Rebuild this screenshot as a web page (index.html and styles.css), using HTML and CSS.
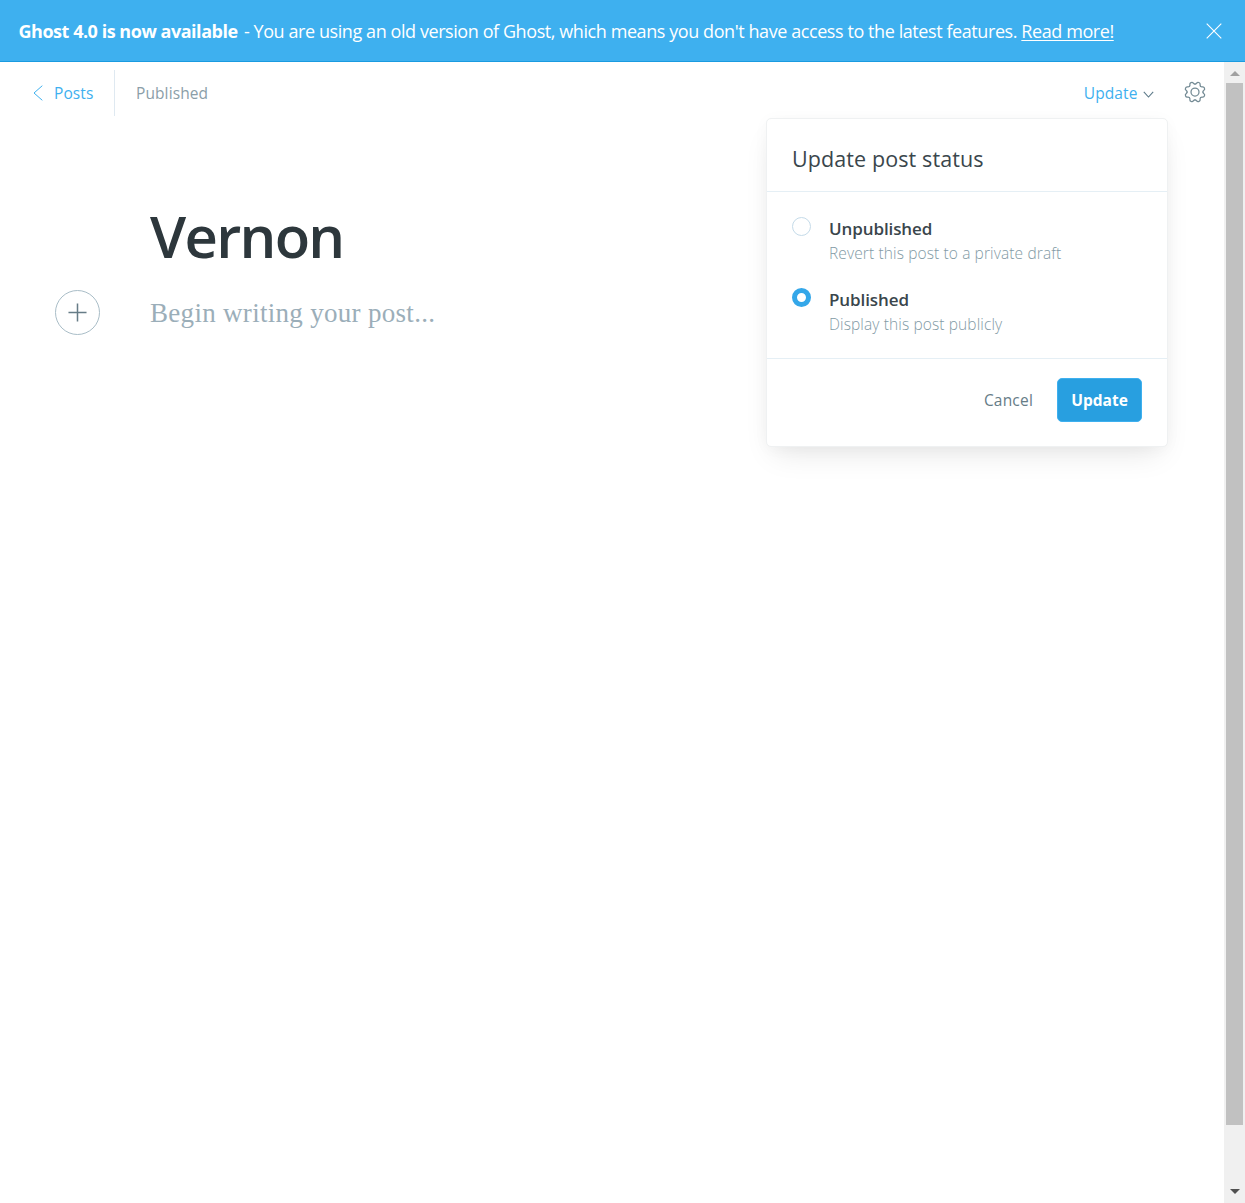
FILE: index.html
```html
<!DOCTYPE html>
<html lang="en">
<head>
<meta charset="utf-8">
<title>Vernon</title>
<link rel="stylesheet" href="styles.css">
</head>
<body>
<div class="app">
  <aside class="banner">
    <p class="banner-text"><strong class="banner-strong">Ghost 4.0 is now available</strong><span class="banner-copy"> - You are using an old version of Ghost, which means you don't have access to the latest features. <a class="banner-link" href="#">Read more!</a></span></p>
    <svg class="banner-close" viewBox="0 0 16 16"><path d="M.7.7l14.6 14.6M15.3.7L.7 15.3"/></svg>
  </aside>
  <div class="viewport">
    <main class="editor">
      <header class="toolbar">
        <a class="back" href="#">
          <svg class="back-icon" viewBox="0 0 10 16"><path d="M9.3.7L1 8l8.3 7.3"/></svg>
          <span>Posts</span>
        </a>
        <span class="state">Published</span>
        <div class="actions">
          <div class="publish">
            <button class="publish-trigger"><span>Update</span>
              <svg class="caret" viewBox="0 0 11 7"><path d="M.8.8l4.7 5.2L10.2.8"/></svg>
            </button>
            <section class="menu">
              <h2 class="menu-title">Update post status</h2>
              <div class="menu-body">
                <div class="option">
                  <span class="radio"></span>
                  <div><div class="option-name">Unpublished</div><div class="option-desc">Revert this post to a private draft</div></div>
                </div>
                <div class="option">
                  <span class="radio radio-on"></span>
                  <div><div class="option-name">Published</div><div class="option-desc">Display this post publicly</div></div>
                </div>
              </div>
              <footer class="menu-footer">
                <button class="cancel">Cancel</button>
                <button class="submit">Update</button>
              </footer>
            </section>
          </div>
          <svg class="gear" viewBox="-11 -11 22 22">
            <defs><path id="tooth" d="M0-7.900C2.200-7.900 1.300-10.500 3.830-9.500 6.500-8.500 4.100-7.100 5.590-5.590"/></defs>
            <circle r="4"/>
            <use href="#tooth"/>
            <use href="#tooth" transform="rotate(45)"/>
            <use href="#tooth" transform="rotate(90)"/>
            <use href="#tooth" transform="rotate(135)"/>
            <use href="#tooth" transform="rotate(180)"/>
            <use href="#tooth" transform="rotate(225)"/>
            <use href="#tooth" transform="rotate(270)"/>
            <use href="#tooth" transform="rotate(315)"/>
          </svg>
        </div>
      </header>
      <article class="post">
        <h1 class="post-title">Vernon</h1>
        <div class="post-row">
          <button class="add"><svg class="add-icon" viewBox="0 0 20 20"><path d="M10 .5v19M.5 10h19"/></svg></button>
          <p class="placeholder">Begin writing your post...</p>
        </div>
      </article>
    </main>
    <div class="scrollbar">
      <span class="arrow arrow-up"></span>
      <span class="thumb"></span>
      <span class="arrow arrow-down"></span>
    </div>
  </div>
</div>
</body>
</html>
```
FILE: styles.css
```css
* { box-sizing: border-box; }
body { margin: 0; background: #fff; color: #3a464c; font-family: "Open Sans", "Noto Sans", sans-serif; }
h1, h2, p { margin: 0; }
button { border: 0; padding: 0; background: none; font: inherit; color: inherit; }
a { color: inherit; text-decoration: none; }
svg { display: block; flex: none; fill: none; }
.app { height: 1203px; display: flex; flex-direction: column; overflow: hidden; }

.banner { height: 62px; flex: none; display: flex; align-items: center; justify-content: space-between; padding: 0 23.5px 0 18.5px; background: #3eb0ef; border-bottom: 1px solid #1a9be0; color: #fff; }
.banner-text { font-size: 18px; line-height: 26px; white-space: pre; }
.banner-strong { font-weight: 700; letter-spacing: -0.47px; margin-right: 2px; }
.banner-copy { letter-spacing: -0.42px; }
.banner-link { text-decoration: underline; text-underline-offset: 2px; text-decoration-thickness: 1px; }
.banner-close { width: 16px; height: 16px; stroke: #fff; stroke-width: 1.1; }

.viewport { flex: 1; display: flex; min-height: 0; }
.editor { flex: 1; }
.toolbar { height: 62px; display: flex; align-items: center; padding: 0 18px 0 33px; font-size: 15.5px; letter-spacing: 0.1px; }
.back { height: 46px; width: 82px; display: flex; align-items: center; gap: 11px; color: #3eb0ef; border-right: 1px solid #dfe9f1; }
.back-icon { width: 10px; height: 16px; stroke: #3eb0ef; }
.state { margin-left: 21px; color: #8b9ea8; }
.actions { margin-left: auto; display: flex; align-items: center; gap: 30.5px; }
.publish { position: relative; color: #3eb0ef; }
.publish-trigger { display: flex; align-items: center; gap: 5px; letter-spacing: 0.1px; }
.caret { width: 11px; height: 7px; margin-top: 2px; stroke: #5d7a89; stroke-width: 1.1; }
.gear { width: 22px; height: 22px; margin-top: -2px; stroke: #738a94; stroke-width: 1.25; stroke-linecap: round; }

.menu { position: absolute; top: 36px; right: -14.5px; width: 402px; height: 329px; background: #fff; border: 1px solid #eff1f2; border-radius: 5px; box-shadow: 0 14px 28px -8px rgba(0,0,0,.1), 0 2px 16px rgba(0,0,0,.03); color: #3a464c; }
.menu-title { height: 73px; padding: 24px 25px 0; font-size: 21.5px; line-height: 32px; font-weight: 400; letter-spacing: 0.1px; border-bottom: 1px solid #e5eff5; white-space: nowrap; }
.menu-body { height: 167px; padding: 25px; border-bottom: 1px solid #e5eff5; }
.option { display: flex; gap: 18px; height: 70.5px; white-space: nowrap; }
.radio { width: 19px; height: 19px; flex: none; border: 1px solid #c5dbe9; border-radius: 50%; background: #fff; }
.radio-on { border: 5px solid #34a7e9; }
.option-name { font-size: 17px; line-height: 24px; font-weight: 600; letter-spacing: -0.1px; }
.option-desc { font-size: 15.5px; line-height: 24px; font-weight: 300; letter-spacing: 0.12px; color: #829aa5; }
.menu-footer { display: flex; align-items: center; justify-content: flex-end; gap: 24px; padding: 19px 25px 0; }
.cancel { color: #667c87; font-size: 15.5px; letter-spacing: 0.2px; }
.submit { width: 85px; height: 44px; border: 1px solid #3eb0ef; border-radius: 5px; background: #289fe0; color: #fff; font-size: 15.5px; font-weight: 700; }

.post { padding: 70px 55px 0; }
.post-title { margin-left: 95px; font-size: 58px; line-height: 84px; font-weight: 600; letter-spacing: -1.7px; color: #2d373c; }
.post-row { display: flex; align-items: center; gap: 50px; margin-top: 12px; }
.add { width: 45px; height: 45px; display: grid; place-items: center; border: 1px solid #a9bdc7; border-radius: 50%; }
.add-icon { width: 19px; height: 19px; stroke: #667c87; stroke-width: 1.6; }
.placeholder { font-family: "Liberation Serif", serif; font-size: 27px; line-height: 40px; letter-spacing: 0.3px; color: #9baeb9; }

.scrollbar { width: 21px; padding: 0 2px; display: flex; flex-direction: column; align-items: center; background: #f0f0f0; }
.arrow { width: 0; height: 0; border-left: 5px solid transparent; border-right: 5px solid transparent; }
.arrow-up { margin: 9px 0 7px; border-bottom: 5px solid #a0a0a0; }
.thumb { width: 17px; height: 1042px; background: #c1c1c1; }
.arrow-down { margin: 64px 0 9px; border-top: 5px solid #505050; }
```
